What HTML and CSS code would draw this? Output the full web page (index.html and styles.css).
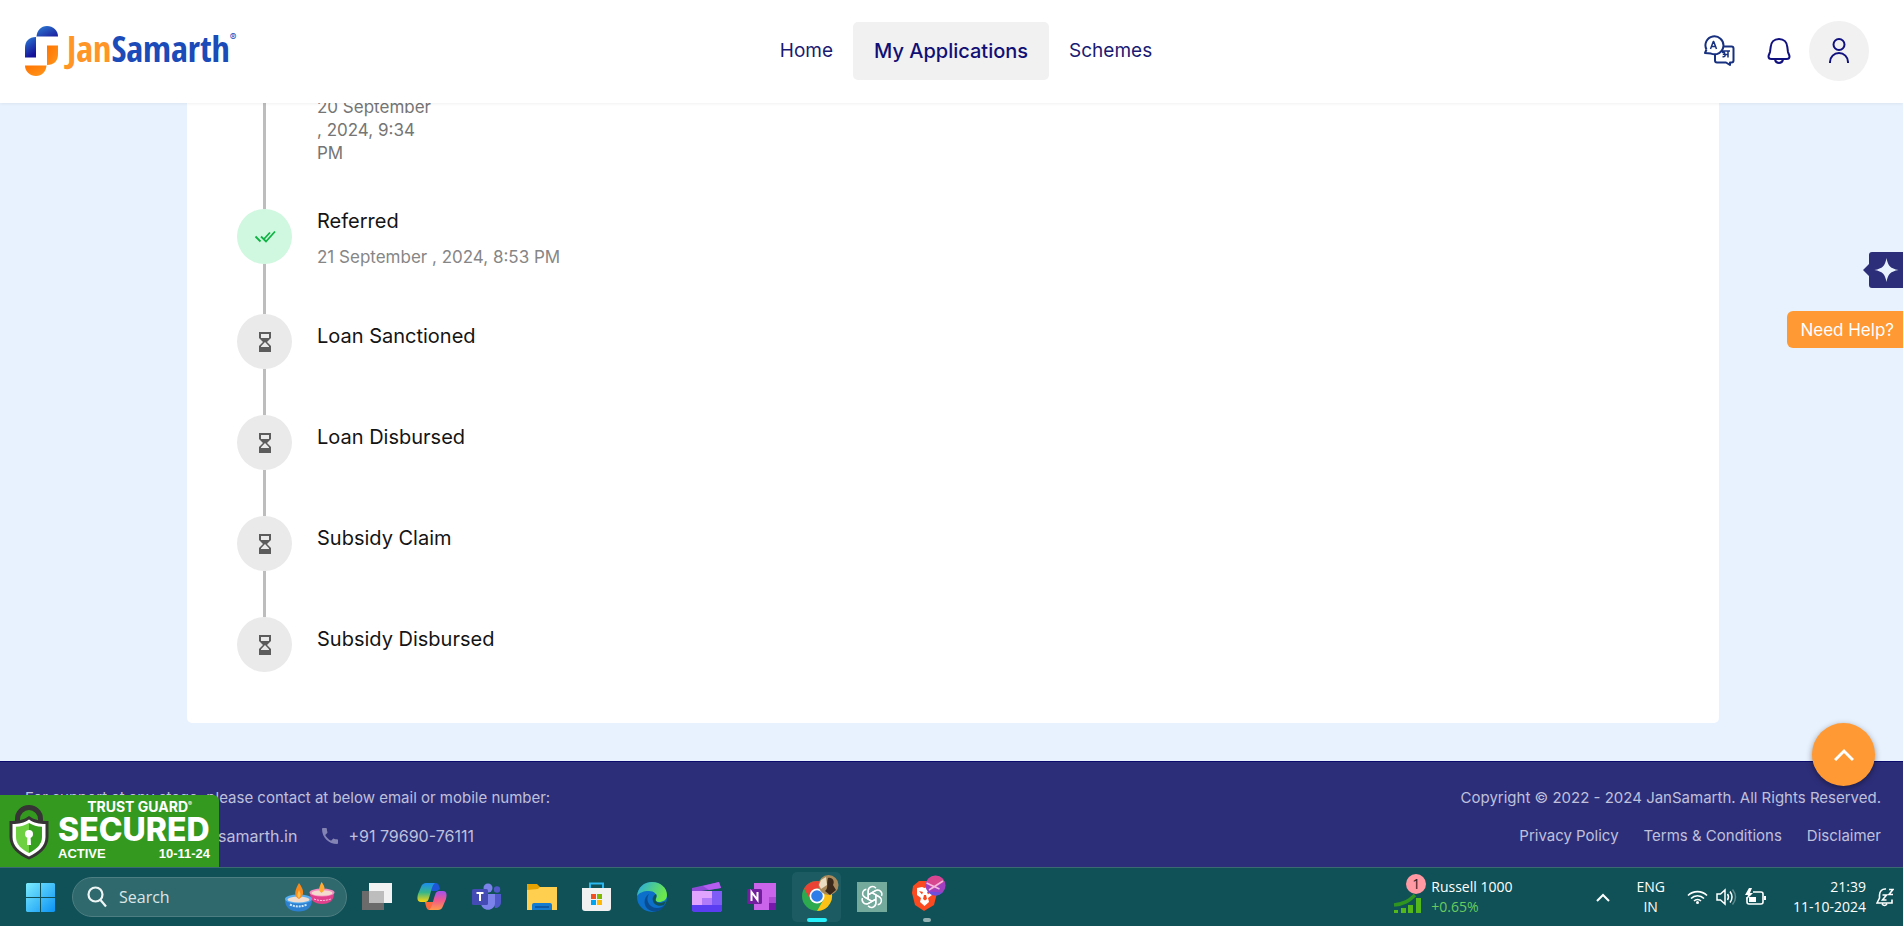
FILE: index.html
```html
<!DOCTYPE html>
<html lang="en">
<head>
<meta charset="utf-8">
<title>JanSamarth - My Applications</title>
<link rel="stylesheet" href="styles.css">
</head>
<body>
<svg class="defs" aria-hidden="true">
  <defs>
    <symbol id="hourglass" viewBox="0 0 14 22"><path fill="#5c5c5c" fill-rule="evenodd" d="M1 1h12v6L9 11l4 4v6H1v-6l4-4-4-4zM3 3v4h8V3zM7 11l-4 4.200V16h8v-.800z"/></symbol>
  </defs>
</svg>

<header class="header">
  <a class="logo" href="#">
    <svg width="33" height="50" viewBox="0 0 33 50">
      <defs>
        <linearGradient id="b1" x1="0" y1="0" x2="1" y2="1"><stop offset="0" stop-color="#2c7fd6"/><stop offset="1" stop-color="#1b1b9c"/></linearGradient>
        <linearGradient id="b2" x1="0" y1="0" x2="0.400" y2="1"><stop offset="0" stop-color="#2c7fd6"/><stop offset="1" stop-color="#15129a"/></linearGradient>
        <linearGradient id="o1" x1="0" y1="0" x2="1" y2="1"><stop offset="0" stop-color="#ff7300"/><stop offset="1" stop-color="#ff981f"/></linearGradient>
      </defs>
      <path fill="url(#b1)" d="M11.500 10.500C12 4.500 16 0 22 0s11 4.500 11 10.500z"/>
      <path fill="url(#b2)" d="M0 31.500V22C0 15 4 11 11 11v20.500z"/>
      <path fill="url(#o1)" d="M22 19.500h11V28c0 7-4 11-11 11z"/>
      <path fill="url(#o1)" d="M0 39.500h21.500C21 45.500 17 50 11 50S0 45.500 0 39.500z"/>
    </svg>
    <span class="wordmark"><span class="jan">Jan</span>Samarth</span><span class="reg">®</span>
  </a>
  <nav class="nav">
    <a href="#">Home</a>
    <a href="#" class="current">My Applications</a>
    <a href="#">Schemes</a>
  </nav>
  <div class="tools">
    <button class="tool" aria-label="Language">
      <svg width="32" height="32" viewBox="0 0 32 32" fill="none" stroke="#17307f" stroke-width="2" stroke-linejoin="round">
        <path d="M3.500 14.500A9 9 0 1 1 8 18.600L2 18l1.500-3.500"/>
        <path d="M20.500 11.500H28.500a2 2 0 0 1 2 2v12a2 2 0 0 1-2 2H27V30l-4-2.500H14a2 2 0 0 1-2-2V19.500"/>
        <path stroke-width="1.500" d="M7.500 14l2.800-7.500h.400l2.800 7.500M8.500 11.500h4M18.500 16h8.500M25 16v6.500M19 17.500c3-1 3.500 1.500 1.500 1.800 2.500.200 2 3.200-1 2.200M21.500 19.500H25"/>
      </svg>
    </button>
    <button class="tool" aria-label="Notifications">
      <svg width="26" height="28" viewBox="0 0 26 28" fill="none" stroke="#11107f" stroke-width="2">
        <path d="M13 2C8 2 5 5.500 4.700 10L4 15c-.200 1.200-1.500 3-1.500 4.500 0 1.700 1 2.500 3 2.500h15c2 0 3-.800 3-2.500 0-1.500-1.300-3.300-1.500-4.500l-.700-5C21 5.500 18 2 13 2z"/>
        <path d="M9 22.500c.500 2.300 2 3.500 4 3.500s3.500-1.200 4-3.500"/>
      </svg>
    </button>
    <button class="tool user" aria-label="Profile">
      <svg width="22" height="28" viewBox="0 0 22 28" fill="none" stroke="#11107f" stroke-width="2">
        <circle cx="11" cy="7.500" r="5.500"/><path d="M2 26v-1a9 9 0 0 1 18 0v1"/>
      </svg>
    </button>
  </div>
</header>

<main class="main">
  <ol class="card">
    <li class="step">
      <div class="rail"><span class="line"></span></div>
      <div class="info"><p class="date narrow">20 September , 2024, 9:34 PM</p></div>
    </li>
    <li class="step done">
      <div class="rail"><span class="dot"><svg width="22" height="14" viewBox="0 0 22 14" fill="none" stroke="#0fb344" stroke-width="1.800"><path d="M1.500 6.500l5 5M7 6.500l5 5L21 1.500M10 9l6-6.500"/></svg></span><span class="line"></span></div>
      <div class="info"><h2>Referred</h2><p class="date">21 September , 2024, 8:53 PM</p></div>
    </li>
    <li class="step pending">
      <div class="rail"><span class="dot"><svg width="14" height="22"><use href="#hourglass"/></svg></span><span class="line"></span></div>
      <div class="info"><h2>Loan Sanctioned</h2></div>
    </li>
    <li class="step pending">
      <div class="rail"><span class="dot"><svg width="14" height="22"><use href="#hourglass"/></svg></span><span class="line"></span></div>
      <div class="info"><h2>Loan Disbursed</h2></div>
    </li>
    <li class="step pending">
      <div class="rail"><span class="dot"><svg width="14" height="22"><use href="#hourglass"/></svg></span><span class="line"></span></div>
      <div class="info"><h2>Subsidy Claim</h2></div>
    </li>
    <li class="step pending">
      <div class="rail"><span class="dot"><svg width="14" height="22"><use href="#hourglass"/></svg></span></div>
      <div class="info"><h2>Subsidy Disbursed</h2></div>
    </li>
  </ol>
</main>

<div class="side">
  <button class="spark" aria-label="Accessibility">
    <svg width="40" height="36" viewBox="0 0 40 36"><path fill="#2d2e79" d="M9 0h31v36H9a3 3 0 0 1-3-3v-9L0 18l6-6V3a3 3 0 0 1 3-3z"/><path fill="#e8f2fe" d="M23.500 6c1.500 8 4 10.500 12 12-8 1.500-10.500 4-12 12-1.500-8-4-10.500-12-12 8-1.500 10.500-4 12-12z"/></svg>
  </button>
  <button class="help">Need Help?</button>
</div>

<footer class="footer">
  <div class="foot-col">
    <p>For support at any stage, please contact at below email or mobile number:</p>
    <div class="contacts">
      <a href="#">customer.support@jansamarth.in</a>
      <a href="#" class="phone"><svg width="16" height="16" viewBox="3 3 18 18" fill="#8384b4"><path d="M6.600 10.800c1.400 2.800 3.800 5.100 6.600 6.600l2.200-2.200c.300-.300.700-.400 1-.200 1.100.400 2.300.600 3.600.600.600 0 1 .400 1 1V20c0 .600-.400 1-1 1C10.600 21 3 13.400 3 4c0-.600.400-1 1-1h3.500c.600 0 1 .400 1 1 0 1.300.200 2.500.600 3.600.100.300 0 .700-.200 1z"/></svg>+91 79690-76111</a>
    </div>
  </div>
  <div class="foot-col right">
    <p>Copyright © 2022 - 2024 JanSamarth. All Rights Reserved.</p>
    <div class="links"><a href="#">Privacy Policy</a><a href="#">Terms &amp; Conditions</a><a href="#">Disclaimer</a></div>
  </div>
  <button class="top" aria-label="Back to top"><svg width="20" height="13" viewBox="0 0 20 13" fill="none" stroke="#fff" stroke-width="3"><path d="M1 12l9-9 9 9"/></svg></button>
  <div class="trust">
    <svg width="40" height="57" viewBox="0 0 40 57">
      <path d="M8.500 22V16a11.500 11.500 0 0 1 23 0v6" fill="none" stroke="#373435" stroke-width="5"/>
      <path fill="#373435" d="M20 13c5 4 11 5 19.500 5v16c0 11-9 18-19.500 22.500C9.500 52 .500 45 .500 34V18C9 18 15 17 20 13z"/>
      <path fill="#fff" d="M20 16.500c5 3.500 10 4.500 16.500 4.500v13c0 9-7 15-16.500 19.500C10.500 49 3.500 43 3.500 34V21C10 21 15 20 20 16.500z"/>
      <path fill="#6dd142" d="M20 20c-4 2.500-8 3.500-13 3.800V34c0 7 5 12 13 16z"/>
      <path fill="#37a01f" d="M20 20c4 2.500 8 3.500 13 3.800V34c0 7-5 12-13 16z"/>
      <circle cx="20" cy="31" r="4" fill="#fff"/><path fill="#fff" d="M18.500 32h3l.500 10h-4z"/>
    </svg>
    <div class="trust-text">
      <span class="t1">TRUST GUARD<sup>®</sup></span>
      <strong>SECURED</strong>
      <span class="t3"><span>ACTIVE</span><span>10-11-24</span></span>
    </div>
  </div>
</footer>

<div class="taskbar">
  <button class="start" aria-label="Start">
    <svg width="29" height="29" viewBox="0 0 29 29"><defs><linearGradient id="w" x1="0" y1="0" x2="1" y2="1"><stop offset="0" stop-color="#7cecfd"/><stop offset="1" stop-color="#0b93f5"/></linearGradient></defs><path fill="url(#w)" d="M1 0h13v14H0V1zM15 0h13l1 1v13H15zM0 15h14v14H1l-1-1zM15 15h14v13l-1 1H15z"/></svg>
  </button>
  <label class="search">
    <svg width="20" height="22" viewBox="0 0 20 22" fill="none" stroke="#eef5f5" stroke-width="2.200"><circle cx="8.500" cy="8.500" r="7"/><path d="M13.500 14l5.500 6.500"/></svg>
    <input type="text" placeholder="Search" aria-label="Search">
    <svg width="50" height="30" viewBox="0 0 50 30">
      <path fill="#e2408c" d="M25 11c0 7 4 11 12 11s12-4 12-11z"/><ellipse cx="37" cy="10.500" rx="12.500" ry="4" fill="#f58cc0"/><ellipse cx="37" cy="11" rx="10.500" ry="2.800" fill="#f3dccd"/><path fill="#ffab33" d="M36.500 0c4 5 4 8 0 11-4-3-2-6 0-11z"/><path stroke="#ffd2e8" stroke-dasharray="2 1" fill="none" d="M29 17q8 3 17 0"/>
      <path fill="#2d80d0" d="M0 18c0 7 5 11.500 13.500 11.500S27 25 27 18z"/><ellipse cx="13.500" cy="17" rx="13.500" ry="4.500" fill="#55aef2"/><ellipse cx="13.500" cy="17.500" rx="11" ry="3" fill="#f0ddcf"/><path fill="#f98b1c" d="M14 1c5 7 6 12 0 16-6-3-4-9 0-16z"/><path fill="#ffc04d" d="M14 8c2 4 2 6 0 8-3-2-1-5 0-8z"/><path stroke="#cde9ff" stroke-width="2" stroke-dasharray="2 1" fill="none" d="M5 22.500q8 4 17 0"/>
    </svg>
  </label>
  <div class="apps">
    <button aria-label="Task view"><svg width="30" height="30" viewBox="0 0 30 30"><path fill="#6b6b6b" d="M0 9h22v19H0z"/><path fill="#f2f2f2" d="M7 1h23v20H7z"/><path fill="#bdbdbd" d="M7 9h15v12H7z"/></svg></button>
    <button aria-label="Copilot"><svg width="30" height="30" viewBox="0 0 30 30"><defs><linearGradient id="c1" x1="0" y1="0" x2="0" y2="1"><stop offset="0" stop-color="#1b8df0"/><stop offset=".5" stop-color="#37b58a"/><stop offset="1" stop-color="#ffd60a"/></linearGradient><linearGradient id="c2" x1="0" y1="0" x2="0" y2="1"><stop offset="0" stop-color="#a350f0"/><stop offset=".5" stop-color="#f05a8c"/><stop offset="1" stop-color="#ff9a4a"/></linearGradient></defs>
      <path fill="#1d57d8" d="M14 1h5c2 0 3 2 4 6l-3 2h-6z"/><path fill="url(#c1)" d="M9 1h9c-3 2-4 9-6 15-1 3-2 4-4 4H4c-4 0-4-4-3-8l3-7c1-3 3-4 5-4z"/><path fill="#fb6a3f" d="M8 20h8l4 8h-8c-2 0-3-3-4-8z"/><path fill="url(#c2)" d="M21 28h-9c3-2 4-9 6-15 1-3 2-4 4-4h4c4 0 4 4 3 8l-3 7c-1 3-3 4-5 4z"/></svg></button>
    <button aria-label="Teams"><svg width="30" height="30" viewBox="0 0 30 30"><circle cx="16" cy="6" r="4.500" fill="#7b83eb"/><circle cx="25" cy="7.500" r="3.200" fill="#5059c9"/><path fill="#5059c9" d="M19 12h10v8c0 4-3 6-6 6z"/><path fill="#7b83eb" d="M9 12h14v9c0 9-14 9-14 0z"/><rect y="7" width="16" height="16" rx="1.500" fill="#454bb5"/><path stroke="#fff" stroke-width="2" d="M4.500 11h7M8 11v8"/></svg></button>
    <button aria-label="File Explorer"><svg width="30" height="30" viewBox="0 0 30 30"><path fill="#e6a200" d="M0 2h10l3 3v5H0z"/><path fill="#ffd050" d="M0 8l11-1 2-2h17v23H0z"/><path fill="#147bd1" d="M5 28v-5q0-2 2-2h16q2 0 2 2v5z"/><path stroke="#0c4d94" stroke-width="1.500" d="M8 25h14"/></svg></button>
    <button aria-label="Microsoft Store"><svg width="30" height="30" viewBox="0 0 30 30"><path fill="none" stroke="#2bb7f0" stroke-width="2" d="M8 7V1.500h13V7"/><path fill="#f1f1f1" d="M0 6h29v20q0 3-3 3H3q-3 0-3-3z"/><path fill="#f25022" d="M9 12h5v5H9z"/><path fill="#7fba00" d="M15 12h5v5h-5z"/><path fill="#00a4ef" d="M9 18h5v5H9z"/><path fill="#ffb900" d="M15 18h5v5h-5z"/></svg></button>
    <button aria-label="Edge"><svg width="30" height="30" viewBox="0 0 30 30"><defs><linearGradient id="e" x1="0" y1="0" x2="1" y2="0.400"><stop offset="0" stop-color="#27a7e8"/><stop offset="1" stop-color="#6be84a"/></linearGradient></defs><circle cx="15" cy="15" r="15" fill="#0c6fc9"/><path fill="url(#e)" d="M0 14C1 5 7 0 15 0c9 0 15 6 15 13 0 5-4 7-8 7-3 0-4-1-3-3 2-5-2-8-7-8C6 9 2 11 0 14z"/><path fill="#0a4c92" d="M12 12c-4 6 0 14 8 14 3 0 6-1 8-4-4 10-15 9-19 3-3-5-1-11 3-13z"/><path fill="#0f5157" d="M19 12c2 3-2 5 0 7 2 3 7 2 10 0l-2 4c-5 2-10 0-11-4-1-3 0-5 3-7z"/></svg></button>
    <button aria-label="Clipchamp"><svg width="30" height="30" viewBox="0 0 30 30"><path fill="#8f4bd8" d="M0 6L27 0l2 6L3 10H0z"/><path fill="#b45df0" d="M11 4l16-4 2 6-12 2z"/><path fill="#7f5cf5" d="M0 9h30v18q0 3-3 3H3q-3 0-3-3z"/><path fill="#e0a4ff" d="M0 9h20v7H10v7H0z"/><path fill="#b07af8" d="M10 16h10v7H10z"/><path fill="#5a3df0" d="M0 23h30v4q0 3-3 3H3q-3 0-3-3z"/></svg></button>
    <button aria-label="OneNote"><svg width="30" height="30" viewBox="0 0 30 30"><path fill="#ca64ea" d="M7 1h22v27H7z"/><path fill="#ae4bd5" d="M22 15h7v6h-7z"/><path fill="#7719aa" d="M22 21h7v7h-7z"/><rect y="7" width="15" height="15" rx="1.500" fill="#711e9f"/><path stroke="#fff" stroke-width="2" fill="none" d="M4.500 19v-9l6 8v-8"/></svg></button>
    <button class="active" aria-label="Chrome"><svg width="38" height="38" viewBox="0 0 38 38"><circle cx="16" cy="21" r="15" fill="#2da94f"/><path fill="#ea4335" d="M3 13.500A15 15 0 0 1 29 13.500H16L9.500 25z"/><path fill="#fbc116" d="M29 13.500A15 15 0 0 1 16 36l6.500-11.200L22 13.500z"/><circle cx="16" cy="21" r="7.500" fill="#fff"/><circle cx="16" cy="21" r="5.800" fill="#2f7de9"/><circle cx="27.500" cy="10" r="10" fill="#a98a5c"/><path fill="#3b2a1c" d="M27 3c5-1 7 4 5 7l3 5-6 5-5-4c4-3 1-7 3-13z"/><path fill="#e9dcc0" d="M20 5l5-3 1 8-6 4-2-4z"/></svg></button>
    <button aria-label="ChatGPT"><svg width="30" height="30" viewBox="0 0 30 30"><path fill="#74aa9c" d="M0 0h30v30H0z"/><g fill="none" stroke="#fff" stroke-width="1.400"><path id="k" d="M11.200 17.200V8.800a4.300 4.300 0 0 1 7.700-2.600M11.200 12.800l7.300-4.200a4.300 4.300 0 0 1 2.200-.500"/><use href="#k" transform="rotate(60 15 15)"/><use href="#k" transform="rotate(120 15 15)"/><use href="#k" transform="rotate(180 15 15)"/><use href="#k" transform="rotate(240 15 15)"/><use href="#k" transform="rotate(300 15 15)"/></g></svg></button>
    <button class="open" aria-label="Brave"><svg width="38" height="38" viewBox="0 0 38 38"><path fill="#fb4a1f" d="M8 6h12l5 5 1 7-3 12-10 6-9-6L1 18l1-7z"/><path fill="#fff" d="M6 13l5-1 2.500 1 3.500-1 5 1-1 7-4 3 1 4-4.500 4L9 27l1-4-4-3z"/><path fill="#fb4a1f" d="M8 16l4 1-1 2.500zM20 16l-4 1 1 2.500zM13 20h2l1 4-2 1.500-2-1.500z"/><circle cx="24.500" cy="10.500" r="10" fill="#a03fc0"/><path fill="#d8468f" d="M15.500 6.500a10 10 0 0 1 18 0l-12 8z"/><path fill="#6a50dc" d="M16.500 16.500l15 1a10 10 0 0 1-15-1z"/><path stroke="#f3b8e2" stroke-width="1.500" fill="none" d="M15.500 8l13 6M32 6L18 15"/></svg></button>
  </div>
  <div class="tray">
    <div class="stock">
      <svg width="32" height="38" viewBox="0 0 32 38"><path fill="#55b81a" d="M1 35v-3h4v3zM8 35v-5h5v5zM15 35v-8h5v8zM23 35V20h5v15z"/><path fill="none" stroke="#2f9420" stroke-width="3.500" d="M1 27c10-1 15-4 21-10"/></svg>
      <span class="badge">1</span>
      <div>Russell 1000<br><span class="gain">+0.65%</span></div>
    </div>
    <svg class="chev" width="14" height="9" viewBox="0 0 14 9" fill="none" stroke="#fff" stroke-width="2"><path d="M1 8l6-6 6 6"/></svg>
    <div class="lang">ENG<br>IN</div>
    <div class="status">
      <svg width="21" height="16" viewBox="0 0 21 16" fill="none" stroke="#fff" stroke-width="1.600"><path d="M1 6.500a13.500 13.500 0 0 1 19 0M4 9.500a9 9 0 0 1 13 0M7 12a5 5 0 0 1 7 0"/><circle cx="10.500" cy="13.500" r="1.500" fill="#fff" stroke="none"/></svg>
      <svg width="21" height="18" viewBox="0 0 21 18" fill="none" stroke="#fff" stroke-width="1.500"><path d="M1 6h3.500L9 2v14l-4.500-4H1zM11.500 6q2 3 0 6M14 3.500q4 5.500 0 11"/><path stroke="#5f8a8d" d="M16.500 1.500q6 7.500 0 15"/></svg>
      <svg width="21" height="18" viewBox="0 0 21 18"><path fill="none" stroke="#fff" stroke-width="1.600" d="M8 4h8q2 0 2 2v8q0 2-2 2H4q-2 0-2-2V9"/><path fill="#fff" d="M19 8h2v4h-2zM4 9h7v5H4zM4 0L0 7h3L1 12l7-7H5l2-5z"/></svg>
    </div>
    <div class="clock">21:39<br>11-10-2024</div>
    <svg width="18" height="20" viewBox="0 0 18 20" fill="none" stroke="#fff" stroke-width="1.600"><path d="M10 2C6 1.500 3.500 4.500 3.500 8v3L1 16h15v-3.500M6 17q2.500 3 5 0M6.500 8h4l-4 5h4M13 2.500h4l-4 5h4"/></svg>
  </div>
</div>
</body>
</html>
```
FILE: styles.css
```css
* { box-sizing: border-box; }
body {
  margin: 0;
  height: 100vh;
  display: flex;
  flex-direction: column;
  overflow: hidden;
  position: relative;
  font-family: Inter, "Liberation Sans", sans-serif;
  background: #e8f2fe;
}
p, h2, ol { margin: 0; padding: 0; }
a { color: inherit; text-decoration: none; }
button { font: inherit; border: 0; padding: 0; background: none; color: inherit; }
svg { display: block; flex: none; }
.defs { position: absolute; width: 0; height: 0; }

.header {
  display: grid;
  grid-template-columns: 1fr auto 1fr;
  align-items: center;
  flex: none;
  height: 103px;
  padding: 0 34px 2px 25px;
  background: #fff;
  box-shadow: 0 1px 3px rgba(0, 0, 0, 0.06);
  z-index: 1;
}
.logo { display: flex; align-items: center; }
.wordmark {
  margin-left: 9px;
  font-family: "Liberation Sans Narrow", "Open Sans Condensed", "Open Sans", sans-serif;
  font-size: 36px;
  font-weight: 700;
  line-height: 46px;
  padding-bottom: 4px;
  color: #1b4bb8;
}
.jan { color: #ff9527; font-weight: 600; }
.reg { align-self: flex-start; font-size: 10px; line-height: 22px; color: #1b4bb8; }
.nav { display: flex; gap: 20px; margin-left: 38px; color: #1a1a73; font-size: 19px; line-height: 58px; }
.nav .current { padding: 0 21px; border-radius: 5px; background: #f1f1f1; color: #100f75; font-size: 20px; font-weight: 500; }
.tools { display: flex; justify-content: flex-end; }
.tool { display: flex; align-items: center; justify-content: center; width: 60px; height: 60px; }
.user { border-radius: 50%; background: #f1f1f1; }

.main {
  flex: 1;
  min-height: 0;
  display: flex;
  flex-direction: column;
  justify-content: flex-end;
  padding: 0 184px 38px 187px;
}
.card { flex: none; padding: 0 50px 51px; list-style: none; background: #fff; border-radius: 5px; }
.step { display: flex; gap: 25px; }
.rail { display: flex; flex-direction: column; align-items: center; width: 55px; }
.dot { display: flex; align-items: center; justify-content: center; width: 55px; height: 55px; border-radius: 50%; background: #eaeaea; }
.done .dot { background: #d0f7df; }
.line { flex: 1; width: 3px; background: #bdbdbd; }
.info { padding-bottom: 44px; }
.done .info { padding-bottom: 45px; }
.pending .info { padding: 10px 0 67px; }
.pending:last-child .info { padding-bottom: 0; }
h2 { font-size: 20px; font-weight: 400; line-height: 24px; color: #141414; }
.date { font-size: 17px; line-height: 23px; color: #868686; }
.done .date { margin-top: 12px; line-height: 24px; }
.narrow { width: 118px; color: #757575; }

.side { position: absolute; top: 252px; right: 0; display: flex; flex-direction: column; align-items: flex-end; gap: 23px; }
.help { height: 37px; padding: 0 9px 0 13px; border-radius: 6px 0 0 6px; background: #ff9933; color: #fff; font-size: 17px; }

.footer {
  position: relative;
  flex: none;
  display: flex;
  justify-content: space-between;
  padding: 24px 22px 19px 25px;
  border-top: 1px solid #0b0b6e;
  background: #2d2e79;
  color: #bfc0dc;
  font-size: 15px;
  line-height: 24px;
}
.foot-col { display: flex; flex-direction: column; gap: 14px; }
.right { align-items: flex-end; }
.contacts, .links { display: flex; gap: 25px; }
.contacts { padding-left: 22px; font-size: 16px; }
.phone { display: flex; align-items: center; gap: 10px; }
.top {
  position: absolute;
  top: -39px;
  right: 28px;
  display: flex;
  align-items: center;
  justify-content: center;
  width: 63px;
  height: 63px;
  border-radius: 50%;
  background: #ff9933;
  box-shadow: 0 2px 6px rgba(0, 0, 0, 0.4);
}
.trust {
  position: absolute;
  left: 0;
  bottom: 0;
  display: flex;
  align-items: center;
  gap: 9px;
  width: 219px;
  height: 72px;
  padding: 0 9px;
  border-radius: 0 6px 0 0;
  background: #33991f;
  color: #fff;
}
.trust-text { display: flex; flex-direction: column; flex: 1; }
.t1 { align-self: flex-end; margin-right: 18px; font-size: 14px; font-weight: 700; line-height: 16px; }
.t1 sup { font-size: 6px; line-height: 0; }
.trust strong { font-size: 32px; font-weight: 800; line-height: 30px; }
.t3 { display: flex; justify-content: space-between; font-family: "Liberation Sans", sans-serif; font-size: 13px; font-weight: 700; line-height: 18px; }

.taskbar {
  flex: none;
  display: flex;
  align-items: center;
  height: 59px;
  padding: 0 9px 0 26px;
  border-top: 1px solid #3c6a72;
  background: #0f5157;
  color: #fff;
  font-family: "Open Sans", sans-serif;
}
.search {
  display: flex;
  align-items: center;
  gap: 12px;
  width: 275px;
  height: 40px;
  margin: 0 2px 0 17px;
  padding: 0 11px 0 14px;
  border: 1px solid #4d7e82;
  border-radius: 20px;
  background: #30696d;
}
.search input { flex: 1; min-width: 0; border: 0; padding: 0; background: none; color: #fff; font: 16px "Open Sans", sans-serif; }
.search input::placeholder { color: #dbe6e7; }
.apps { display: flex; }
.apps button { position: relative; display: flex; align-items: center; justify-content: center; width: 55px; height: 50px; }
.apps .active { width: 49px; margin: 0 3px; padding-bottom: 6px; padding-left: 6px; border-radius: 5px; background: #1c5b61; }
.apps .open { padding: 0 0 6px 7px; }
.active::after, .open::after { content: ""; position: absolute; bottom: 0; left: 50%; width: 20px; height: 4px; margin-left: -10px; border-radius: 2px; background: #27f2fb; }
.apps .open::after { width: 8px; margin-left: -4px; background: #93b0b3; }
.tray { display: flex; align-items: center; margin-left: auto; font-size: 14px; line-height: 20px; }
.stock { position: relative; display: flex; align-items: center; gap: 6px; }
.badge { position: absolute; left: 13px; top: -3px; width: 20px; height: 20px; border-radius: 50%; background: #ff99a4; color: #222; text-align: center; }
.gain { color: #6ccb5f; }
.chev { margin: 0 26px 0 84px; }
.lang { text-align: center; }
.status { display: flex; align-items: center; gap: 8px; margin: 0 27px 0 22px; }
.clock { margin-right: 10px; text-align: right; }
```
